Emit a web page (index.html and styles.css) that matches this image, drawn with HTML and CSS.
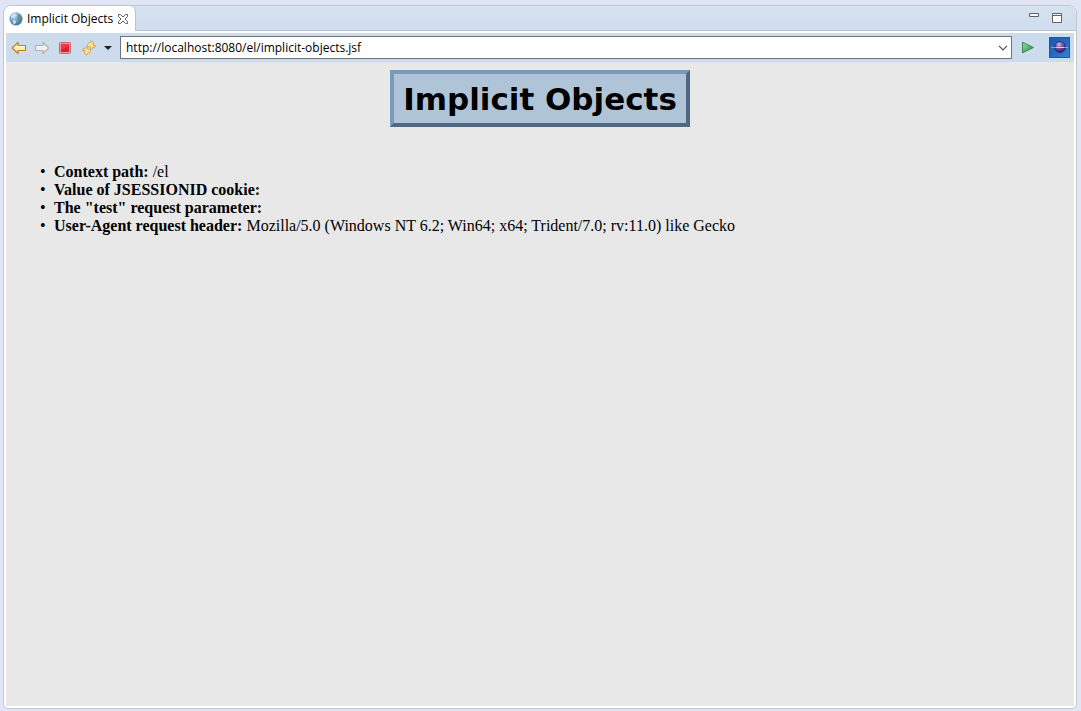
FILE: index.html
```html
<!DOCTYPE html>
<html lang="en">
<head>
<meta charset="utf-8">
<title>Implicit Objects</title>
<link rel="stylesheet" href="styles.css">
</head>
<body>
<div class="view">
  <header class="tab-strip">
    <div class="tab">
      <svg class="globe" width="14" height="14" viewBox="0 0 14 14" aria-hidden="true">
        <defs>
          <radialGradient id="sea" cx="35%" cy="30%" r="75%">
            <stop offset="0" stop-color="#b4d8ee"/><stop offset=".5" stop-color="#6aa6d2"/><stop offset="1" stop-color="#2f6aa4"/>
          </radialGradient>
        </defs>
        <circle cx="7" cy="7" r="6.3" fill="url(#sea)" stroke="#7298b8" stroke-width=".6"/>
        <path d="M2 4C3 2 5 1 7 1.2L8 3 6 4.5 4.5 6 2.5 6.5Z" fill="#dceae2" opacity=".8"/>
        <path d="M8.5 3.5 11 3 12.8 6 12 8 10 9.5 8.8 8 8 6.5Z" fill="#6a8c58" opacity=".7"/>
        <path d="M4 8 6.5 8.5 7 10.5 5.5 12.5 4 11Z" fill="#e4ecd4" opacity=".85"/>
      </svg>
      <span class="tab-title">Implicit Objects</span>
      <button class="icon-button" aria-label="Close tab">
        <svg width="12" height="12" viewBox="0 0 12 12" fill="#fff" stroke="#626262">
          <path d="M1.5 1.5H3.5L6 4 8.5 1.5H10.5V3.5L8 6 10.5 8.5V10.5H8.5L6 8 3.5 10.5H1.5V8.5L4 6 1.5 3.5Z"/>
        </svg>
      </button>
    </div>
    <div class="window-controls">
      <button class="icon-button" aria-label="Minimize">
        <svg width="10" height="10" viewBox="0 0 10 10"><path d="M.5.5H9.5V3.5H.5Z" fill="#fff" stroke="#606060"/></svg>
      </button>
      <button class="icon-button" aria-label="Maximize">
        <svg width="10" height="10" viewBox="0 0 10 10"><path d="M.5.5H9.5V9.5H.5ZM.5 2.5H9.5" fill="#fff" stroke="#606060"/></svg>
      </button>
    </div>
  </header>

  <div class="toolbar">
    <div class="nav-buttons">
      <button class="icon-button" aria-label="Back">
        <svg width="16" height="14" viewBox="0 0 16 14">
          <defs><linearGradient id="gold" x2="0" y2="1"><stop offset="0" stop-color="#fffef0"/><stop offset="1" stop-color="#ffe08a"/></linearGradient></defs>
          <path d="M1.2 7 7 1.5V4.5H14.5V9.5H7V12.5Z" fill="url(#gold)" stroke="#bd8420" stroke-width="1.2" stroke-linejoin="round"/>
        </svg>
      </button>
      <button class="icon-button" aria-label="Forward">
        <svg width="16" height="14" viewBox="0 0 16 14"><path d="M14.8 7 9 1.5V4.5H1.5V9.5H9V12.5Z" fill="#f1f1f1" stroke="#b0b0b0" stroke-width="1.2" stroke-linejoin="round"/></svg>
      </button>
      <button class="icon-button" aria-label="Stop">
        <svg width="16" height="14" viewBox="0 0 16 14">
          <rect x="2.5" y="1.5" width="11" height="11" rx="1" fill="#ef9a9c" stroke="#bc6b70"/>
          <rect x="4" y="3" width="8" height="8" fill="#dd1c2c"/><path d="M4 3H12V5L4 9Z" fill="#e63a48"/>
        </svg>
      </button>
    </div>
    <div class="refresh">
      <button class="icon-button" aria-label="Refresh">
        <svg width="16" height="16" viewBox="0 0 16 16" fill="#ffe49a" stroke="#cb9a42" stroke-width=".9" stroke-linejoin="round">
          <path d="M6.5 7.2C5.8 4.5 7.3 2.5 9.8 2.3L10.2.8 12.5 2.6 12.3 5.5 14.6 5.6 13.5 7.6 10.5 8.2 8.6 6.5Z"/>
          <path d="M9.5 8.8C10.2 11.500 8.700 13.500 6.200 13.700L5.800 15.200 3.500 13.400 3.700 10.500 1.400 10.400 2.500 8.400 5.500 7.800 7.400 9.500Z"/>
        </svg>
      </button>
      <button class="icon-button" aria-label="Refresh options">
        <svg width="8" height="4" viewBox="0 0 8 4"><path d="M0 0H8L4 4Z" fill="#202020"/></svg>
      </button>
    </div>
    <div class="address">
      <input class="address-input" type="text" aria-label="Address" value="http://localhost:8080/el/implicit-objects.jsf">
      <button class="icon-button" aria-label="Show history">
        <svg width="10" height="6" viewBox="0 0 10 6"><path d="M1 .8 5 4.8 9 .8" fill="none" stroke="#505050" stroke-width="1.2"/></svg>
      </button>
    </div>
    <button class="icon-button go" aria-label="Go">
      <svg width="14" height="13" viewBox="0 0 14 13">
        <defs><linearGradient id="leaf" x2="1" y2="1"><stop offset="0" stop-color="#a6dba0"/><stop offset=".6" stop-color="#4fae68"/><stop offset="1" stop-color="#2f8f50"/></linearGradient></defs>
        <path d="M1.5 1.2 12.5 6.5 1.5 11.8Z" fill="url(#leaf)" stroke="#318a53" stroke-linejoin="round"/>
      </svg>
    </button>
    <svg class="planet" width="21" height="21" viewBox="0 0 21 21" role="img" aria-label="Busy indicator">
      <defs>
        <linearGradient id="sky" x2="1" y2="1"><stop offset="0" stop-color="#1a5cb4"/><stop offset=".5" stop-color="#2468bf"/><stop offset="1" stop-color="#3585d6"/></linearGradient>
        <radialGradient id="orb" cx="42%" cy="28%" r="70%"><stop offset="0" stop-color="#d2bfe4"/><stop offset=".4" stop-color="#7a62ac"/><stop offset="1" stop-color="#2e1c60"/></radialGradient>
      </defs>
      <rect width="21" height="21" fill="#1c58a8"/>
      <rect x="1" y="1" width="19" height="19" fill="url(#sky)"/>
      <circle cx="11" cy="10" r="5.5" fill="url(#orb)" stroke="#33206a" stroke-width=".8"/>
      <path d="M2 10.500H19" stroke="#9d94dc" stroke-width="1"/>
      <path d="M7 10.500H15" stroke="#d8c8ec" stroke-width="1"/>
    </svg>
  </div>

  <main class="page">
    <h1 class="title">Implicit Objects</h1>
    <ul class="facts">
      <li><b>Context path:</b> /el</li>
      <li><b>Value of JSESSIONID cookie:</b></li>
      <li><b>The "test" request parameter:</b></li>
      <li><b>User-Agent request header:</b> Mozilla/5.0 (Windows NT 6.2; Win64; x64; Trident/7.0; rv:11.0) like Gecko</li>
    </ul>
  </main>
</div>
</body>
</html>
```
FILE: styles.css
```css
* {
  box-sizing: border-box;
}

body {
  margin: 0;
  min-height: 100vh;
  padding: 5px 4px 2px 3px;
  display: flex;
  background: #e0e6f6;
  font: 12px/16px "Open Sans", "Noto Sans", sans-serif;
  color: #000;
}

.view {
  flex: 1;
  display: flex;
  flex-direction: column;
  border: 1px solid #c6c6ca;
  border-radius: 8px 8px 5px 5px;
  background: #fff;
  overflow: hidden;
}

.icon-button {
  display: flex;
  padding: 0;
  border: 0;
  background: none;
}

.tab-strip {
  height: 25px;
  display: flex;
  justify-content: space-between;
  border-bottom: 1px solid #b9c3d2;
  background: linear-gradient(#d5e2f0, #cfdded);
}

.tab {
  height: 25px;
  display: flex;
  align-items: center;
  gap: 4px;
  padding: 0 6px 0 5px;
  border-right: 1px solid #b9c3d2;
  border-top-right-radius: 6px;
  background: #fff;
}

.tab-title {
  white-space: nowrap;
}

.window-controls {
  display: flex;
  gap: 13px;
  padding: 7px 14px 0 0;
}

.toolbar {
  height: 29px;
  margin: 2px 2px 0;
  display: flex;
  align-items: center;
  padding: 0 4px 0 5px;
  background: #cddcec;
}

.nav-buttons {
  display: flex;
  align-items: center;
  gap: 7px;
}

.refresh {
  display: flex;
  align-items: center;
  gap: 7px;
  padding: 0 8px;
}

.address {
  flex: 1;
  height: 23px;
  display: flex;
  align-items: center;
  padding: 0 3px 0 5px;
  border: 1px solid #6f747a;
  background: #fff;
}

.address-input {
  flex: 1;
  min-width: 0;
  padding: 0;
  border: 0;
  outline: 0;
  background: none;
  color: #000;
  font: 12px/16px "Open Sans", "Noto Sans", sans-serif;
}

.go {
  margin: 0 14px 0 9px;
}

.page {
  flex: 1;
  margin: 0 2px 2px;
  padding: 8px;
  background: #e8e8e8;
  font: 16px/18px "Liberation Serif", "Times New Roman", serif;
}

.title {
  width: fit-content;
  margin: 0 auto;
  padding: 6px 9px 4px;
  border: 4px solid;
  border-color: #779bbd #4f6984 #4f6984 #779bbd;
  background: #b0c4d8;
  font: bold 31px/39px "DejaVu Sans", Verdana, sans-serif;
  white-space: nowrap;
}

.facts {
  margin: 36px 0 0;
  padding: 0 0 0 40px;
  list-style: none;
}

.facts li::before {
  content: "•";
  display: inline-block;
  width: 14px;
  margin-left: -14px;
}
```
